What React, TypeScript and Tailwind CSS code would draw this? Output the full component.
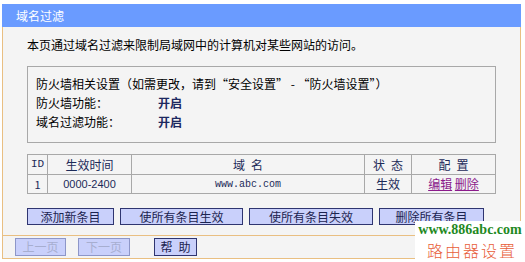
const buttons = [
  { label: "添加新条目", w: "w-[87px]" },
  { label: "使所有条目生效", w: "w-[123px]" },
  { label: "使所有条目失效", w: "w-[124px]" },
  { label: "删除所有条目", w: "w-[105px]" },
];

function Spaced({ a, b }: { a: string; b: string }) {
  return (
    <span className="inline-flex gap-[6px]">
      <span>{a}</span>
      <span>{b}</span>
    </span>
  );
}

export default function App() {
  return (
    <main className="relative h-[262px] w-[525px] overflow-hidden bg-white pl-[2px] pt-[4px] font-['Noto_Sans_CJK_SC',sans-serif] text-[12px] text-black">
      <div className="w-[519px]">
        <div className="flex h-[23px] items-center bg-[#6a9bff] pl-[14px] pt-[1px] text-[12px] leading-none text-white">
          域名过滤
        </div>

        <div className="border-x border-[#e9bf82] bg-[#f4f4f4] pb-[10px] pl-[24px] pt-[10px]">
          <p className="h-[16px] leading-[16px]">
            本页通过域名过滤来限制局域网中的计算机对某些网站的访问。
          </p>

          <div className="mt-[13px] w-[469px] border border-[#a8a8a8] pb-[11px] pl-[8px] pt-[7px] leading-[19px]">
            <p className="h-[19px]">
              防火墙相关设置（如需更改，请到“安全设置” - “防火墙设置”）
            </p>
            <div className="flex h-[19px]">
              <span className="w-[122px]">防火墙功能：</span>
              <span className="font-bold text-[#1c2860]">开启</span>
            </div>
            <div className="flex h-[19px]">
              <span className="w-[122px]">域名过滤功能：</span>
              <span className="font-bold text-[#1c2860]">开启</span>
            </div>
          </div>

          <table className="mt-[11px] w-[468px] table-fixed border-collapse text-center text-[#1c2a58]">
            <colgroup>
              <col className="w-[20px]" />
              <col className="w-[84px]" />
              <col className="w-[233px]" />
              <col className="w-[47px]" />
              <col className="w-[84px]" />
            </colgroup>
            <thead>
              <tr className="h-[20px]">
                <th className="border border-[#a8a8a8] p-0 font-['Liberation_Mono',monospace] text-[11px] font-normal">ID</th>
                <th className="border border-[#a8a8a8] p-0 font-normal">生效时间</th>
                <th className="border border-[#a8a8a8] p-0 font-normal"><Spaced a="域" b="名" /></th>
                <th className="border border-[#a8a8a8] p-0 font-normal"><Spaced a="状" b="态" /></th>
                <th className="border border-[#a8a8a8] p-0 font-normal"><Spaced a="配" b="置" /></th>
              </tr>
            </thead>
            <tbody>
              <tr className="h-[19px]">
                <td className="border border-[#a8a8a8] p-0 text-[11px]">1</td>
                <td className="border border-[#a8a8a8] p-0 font-['Liberation_Sans',sans-serif] text-[11px]">0000-2400</td>
                <td className="border border-[#a8a8a8] p-0 font-['Liberation_Mono',monospace] text-[10px]">www.abc.com</td>
                <td className="border border-[#a8a8a8] p-0">生效</td>
                <td className="border border-[#a8a8a8] p-0">
                  <a className="text-[#8b1a8b] underline">编辑</a>{" "}
                  <a className="text-[#8b1a8b] underline">删除</a>
                </td>
              </tr>
            </tbody>
          </table>

          <div className="mt-[14px] flex gap-[6px]">
            {buttons.map((b) => (
              <button
                key={b.label}
                className={`h-[17px] ${b.w} border border-[#2f3570] bg-[#c9d0fb] text-[12px] leading-none text-[#1c2450]`}
              >
                {b.label}
              </button>
            ))}
          </div>
        </div>

        <div className="flex h-[24px] items-center border-x border-y border-[#e9bf82] bg-[#f4f4f4] pl-[12px]">
          <button className="h-[18px] w-[51px] border border-[#8d96c8] bg-[#c9d0fb] text-[12px] leading-none text-[#a7aed0]">
            上一页
          </button>
          <button className="ml-[12px] h-[18px] w-[52px] border border-[#8d96c8] bg-[#c9d0fb] text-[12px] leading-none text-[#a7aed0]">
            下一页
          </button>
          <button className="ml-[24px] h-[18px] w-[43px] border border-[#2f3570] bg-[#c9d0fb] text-[12px] leading-none text-[#1c2450]">
            <Spaced a="帮" b="助" />
          </button>
        </div>
      </div>

      <div className="absolute left-[415px] top-[221px] flex h-[41px] w-[110px] flex-col items-center bg-white">
        <span className="mt-[1px] font-['Liberation_Serif',serif] text-[14px] font-bold leading-[16px] text-[#1f8a1f]">
          www.886abc.com
        </span>
        <span className="mt-[2px] pl-[4px] font-['Noto_Sans_CJK_SC',serif] text-[16px] font-light leading-[20px] tracking-[2px] text-[#e8603a]">
          路由器设置
        </span>
      </div>
    </main>
  );
}
